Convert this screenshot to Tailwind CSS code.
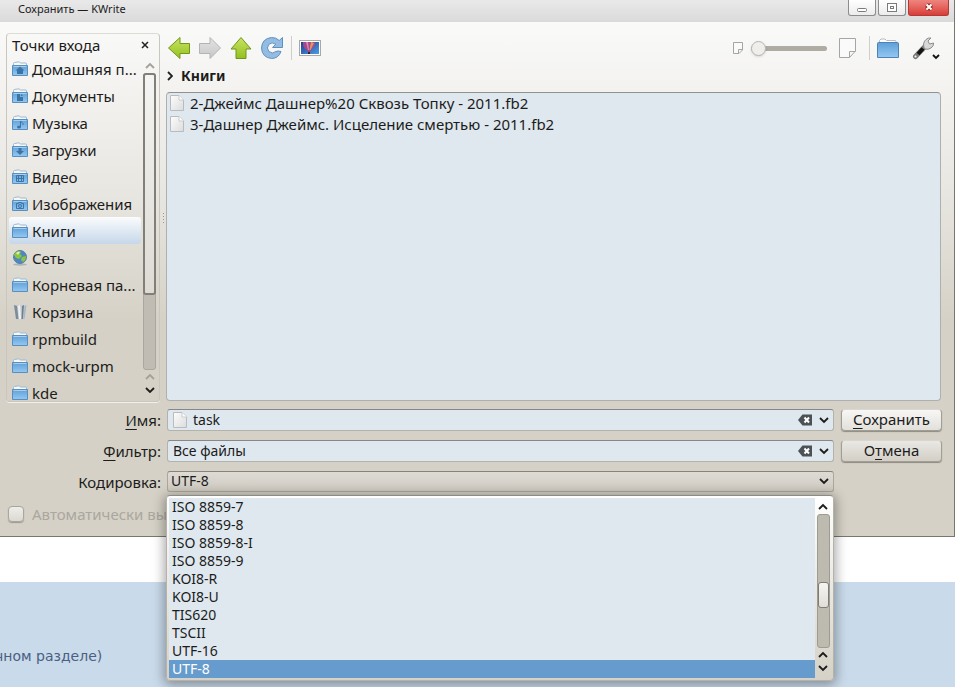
<!DOCTYPE html>
<html lang="ru">
<head>
    <meta charset="UTF-8">
    <meta name="viewport" content="width=device-width, initial-scale=1.0">
    <title>Сохранить — KWrite</title>
    <script src="https://cdn.jsdelivr.net/npm/@tailwindcss/browser@4"></script>
</head>
<body class="min-h-screen flex flex-col overflow-hidden bg-white font-['Noto_Sans',sans-serif] text-[15px] leading-5 text-[#1c1c1c]">
    <!-- Shared icons -->
    <svg class="absolute size-0" aria-hidden="true">
        <defs>
            <linearGradient id="g-blue" x1="0" y1="0" x2="0" y2="1"><stop offset="0" stop-color="#5f9fd6"/><stop offset="1" stop-color="#94c8f2"/></linearGradient>
            <linearGradient id="g-green" x1="0" y1="0" x2="0" y2="1"><stop offset="0" stop-color="#c9e463"/><stop offset="1" stop-color="#93c01f"/></linearGradient>
            <linearGradient id="g-gray" x1="0" y1="0" x2="0" y2="1"><stop offset="0" stop-color="#e4e4e4"/><stop offset="1" stop-color="#c6c6c6"/></linearGradient>
            <linearGradient id="g-page" x1="0" y1="0" x2="1" y2="1"><stop offset="0" stop-color="#fdfdfd"/><stop offset="1" stop-color="#dcdcdc"/></linearGradient>
            <linearGradient id="g-sky" x1="0" y1="0" x2="1" y2="1"><stop offset="0" stop-color="#1c3f8c"/><stop offset="1" stop-color="#4f9be6"/></linearGradient>
        </defs>
        <symbol id="folder" viewBox="0 0 16 16">
            <path d="M1.5 5V2.5Q1.5 1.5 2.5 1.5L7 .8L8.5 2H14Q14.5 2 14.5 3V5" fill="#f4f8fb" stroke="#9fb9cf"/>
            <path d="M.5 4.5H15.5V14.5H.5Z" fill="url(#g-blue)" stroke="#5a8fbd"/>
            <path d="M1.5 5.5H14.5" stroke="#a5cff0"/>
        </symbol>
        <symbol id="page" viewBox="0 0 14 16">
            <path d="M.5.5H9L13.5 5V15.5H.5Z" fill="url(#g-page)" stroke="#b9bcbe"/>
            <path d="M9 .5V5H13.5" fill="#fff" stroke="#c8cacb"/>
        </symbol>
        <symbol id="down" viewBox="0 0 10 7"><path d="M1 1L5 5L9 1" fill="none" stroke="currentColor" stroke-width="1.800"/></symbol>
        <symbol id="up" viewBox="0 0 10 7"><path d="M1 6L5 2L9 6" fill="none" stroke="currentColor" stroke-width="1.800"/></symbol>
        <symbol id="clear" viewBox="0 0 14 12">
            <path d="M0 6L4.500 .5H14V11.500H4.500Z" fill="#4c5155"/>
            <path d="M6.500 3.500L11 8.500M11 3.500L6.500 8.500" stroke="#fff" stroke-width="2"/>
        </symbol>
    </svg>

    <!-- Dialog window -->
    <div class="relative z-10 flex flex-col border-r border-b border-[#77776f] bg-linear-to-b from-[#fafaf9] from-[22px] via-[#e9e7e2] via-35% to-[#d5d1c6] to-60%">
        <header class="flex h-[22px] items-start justify-between bg-linear-to-b from-[#e9e9e9] to-[#dadada] pl-[18px] pr-[5px]">
            <h1 class="text-[11px] leading-[18px]">Сохранить — KWrite</h1>
            <div class="flex gap-[2px]">
                <button aria-label="Свернуть" class="flex h-4 w-7 items-center justify-center rounded-b-[3px] border border-t-0 border-[#8c8c8c] bg-linear-to-b from-white to-[#ececec]">
                    <svg class="h-4 w-3" viewBox="0 0 12 16" fill="#fff" stroke="#7b7b7b"><rect x="1.500" y="8.500" width="9" height="3" rx="1"/></svg>
                </button>
                <button aria-label="Развернуть" class="flex h-4 w-7 items-center justify-center rounded-b-[3px] border border-t-0 border-[#8c8c8c] bg-linear-to-b from-white to-[#ececec]">
                    <svg class="h-4 w-3" viewBox="0 0 12 16" fill="#fff" stroke="#7b7b7b"><rect x="1.500" y="3.500" width="9" height="8"/><rect x="4.500" y="6.500" width="3" height="2"/></svg>
                </button>
                <button aria-label="Закрыть" class="flex h-4 w-[41px] items-center justify-center rounded-b-[3px] border border-t-0 border-[#b03a35] bg-linear-to-b from-[#ee8580] to-[#d93b38]">
                    <svg class="h-4 w-3" viewBox="0 0 12 16"><path d="M3.500 4.500L8.500 9.500M8.500 4.500L3.500 9.500" stroke="#8d2a26" stroke-width="4"/><path d="M3.500 4.500L8.500 9.500M8.500 4.500L3.500 9.500" stroke="#fff" stroke-width="2"/></svg>
                </button>
            </div>
        </header>

        <div class="flex h-[380px] pl-[6px] pr-[13px] pt-[11px]">
            <!-- Places -->
            <aside class="flex w-[154px] shrink-0 flex-col overflow-hidden rounded-[4px] border border-[#c9c6be] border-t-[#dddbd6] shadow-[0_1px_0_#f2f0ec]">
                <div class="flex h-[21px] shrink-0 items-center justify-between pl-[5px] pr-2">
                    <h2 class="text-[15px]">Точки входа</h2>
                    <button aria-label="Закрыть панель" class="flex size-3 items-center justify-center rounded-full">
                        <svg class="size-2" viewBox="0 0 8 8"><path d="M1 1L7 7M7 1L1 7" stroke="#222" stroke-width="1.500"/></svg>
                    </button>
                </div>
                <div class="flex min-h-0 flex-1">
                    <ul class="min-w-0 flex-1 overflow-hidden pl-[2px]">
                        <li><a href="#" class="flex h-[27px] items-center gap-1 pl-[3px]"><svg class="size-4 shrink-0"><use href="#folder"/><path d="M8 5.500L3.500 9.500H5V13H11V9.500H12.500Z" fill="#3d74a6"/></svg><span class="whitespace-nowrap">Домашняя п...</span></a></li>
                        <li><a href="#" class="flex h-[27px] items-center gap-1 pl-[3px]"><svg class="size-4 shrink-0"><use href="#folder"/><path d="M5 6H8V9H11V13H5ZM9 6L11 8H9Z" fill="#3d74a6"/></svg><span>Документы</span></a></li>
                        <li><a href="#" class="flex h-[27px] items-center gap-1 pl-[3px]"><svg class="size-4 shrink-0"><use href="#folder"/><path d="M8.500 12V6L11 8.500V10" fill="none" stroke="#3d74a6"/><ellipse cx="7" cy="12" rx="2" ry="1.500" fill="#3d74a6"/></svg><span>Музыка</span></a></li>
                        <li><a href="#" class="flex h-[27px] items-center gap-1 pl-[3px]"><svg class="size-4 shrink-0"><use href="#folder"/><path d="M6.500 6H9.500V9H12L8 13L4 9H6.500Z" fill="#3d74a6"/></svg><span>Загрузки</span></a></li>
                        <li><a href="#" class="flex h-[27px] items-center gap-1 pl-[3px]"><svg class="size-4 shrink-0"><use href="#folder"/><path d="M4.500 6.500H11.500V12.500H4.500ZM6.500 6.500V12.500M9.500 6.500V12.500M4.500 9.500H11.500" fill="none" stroke="#3d74a6"/></svg><span>Видео</span></a></li>
                        <li><a href="#" class="flex h-[27px] items-center gap-1 pl-[3px]"><svg class="size-4 shrink-0"><use href="#folder"/><path d="M4.500 7.500H6.500V6.500H9.500V7.500H11.500V12.500H4.500Z" fill="none" stroke="#3d74a6"/><circle cx="8" cy="10" r="1.500" fill="none" stroke="#3d74a6"/></svg><span>Изображения</span></a></li>
                        <li><a href="#" aria-current="true" class="flex h-[27px] items-center gap-1 rounded-[3px] bg-linear-to-b from-[#fbfcfd] to-[#c6d7e9] pl-[3px]"><svg class="size-4 shrink-0"><use href="#folder"/></svg><span>Книги</span></a></li>
                        <li><a href="#" class="flex h-[27px] items-center gap-1 pl-[3px]">
                            <svg class="size-4 shrink-0" viewBox="0 0 16 16"><ellipse cx="8" cy="14.500" rx="7" ry="1.200" fill="#aab4bb"/><circle cx="8" cy="7" r="6.500" fill="#4d87c4" stroke="#5a7fa5"/><path d="M3 3Q6 0 9 1.500L8 4L10 6L7 9L4 8L2 5ZM10 7L14 6Q14 10 11 12L9 10Z" fill="#8cc63c"/><path d="M4 3Q6 1 8 2L6 5Z" fill="#d9f0a0"/></svg>
                            <span>Сеть</span></a></li>
                        <li><a href="#" class="flex h-[27px] items-center gap-1 pl-[3px]"><svg class="size-4 shrink-0"><use href="#folder"/></svg><span class="whitespace-nowrap">Корневая па...</span></a></li>
                        <li><a href="#" class="flex h-[27px] items-center gap-1 pl-[3px]">
                            <svg class="size-4 shrink-0" viewBox="0 0 16 16"><path d="M1.500 1L14.500 1L12.500 15.500H4Z" fill="#c9ced2"/><path d="M2 1L5 2L6.500 15H4Z" fill="#7d8c98"/><path d="M6 2L8 1L9 15H7Z" fill="#eef1f3"/><path d="M10 2L12 1L11 15H9.500Z" fill="#6f8090"/><path d="M12.500 2L14.500 1L12.500 15H11.500Z" fill="#a9b8c4"/></svg>
                            <span>Корзина</span></a></li>
                        <li><a href="#" class="flex h-[27px] items-center gap-1 pl-[3px]"><svg class="size-4 shrink-0"><use href="#folder"/></svg><span>rpmbuild</span></a></li>
                        <li><a href="#" class="flex h-[27px] items-center gap-1 pl-[3px]"><svg class="size-4 shrink-0"><use href="#folder"/></svg><span>mock-urpm</span></a></li>
                        <li><a href="#" class="flex h-[27px] items-center gap-1 pl-[3px]"><svg class="size-4 shrink-0"><use href="#folder"/></svg><span>kde</span></a></li>
                    </ul>
                    <div class="flex w-[18px] shrink-0 flex-col items-center pb-[7px] pr-[1px] pt-[7px]">
                        <svg class="mb-1 h-[7px] w-[10px] shrink-0 text-[#a3a19b]"><use href="#up"/></svg>
                        <div class="w-[13px] flex-1 rounded-[3px] border border-[#aaa79e] bg-[#c0bcb3]">
                            <div class="-mx-px -mt-px h-[222px] rounded-[3px] border-2 border-[#827f78] bg-linear-to-b from-[#f4f4f2] to-[#dedbd5]"></div>
                        </div>
                        <svg class="mt-[3px] h-[7px] w-[10px] shrink-0 text-[#a3a19b]"><use href="#up"/></svg>
                        <svg class="mt-[7px] h-[7px] w-[10px] shrink-0"><use href="#down"/></svg>
                    </div>
                </div>
            </aside>

            <!-- Splitter -->
            <div class="flex w-[6px] shrink-0 items-center justify-center">
                <svg class="h-3 w-[3px]" viewBox="0 0 3 12" fill="#98958d"><path d="M1 1h1v1H1zM1 4h1v1H1zM1 7h1v1H1zM1 10h1v1H1z"/></svg>
            </div>

            <main class="flex min-w-0 flex-1 flex-col">
                <div class="flex h-[30px] items-center justify-between">
                    <div class="flex items-center gap-[7px] pl-px">
                        <button aria-label="Назад"><svg class="size-6" viewBox="0 0 24 24"><path d="M1.500 12L13 1.500V7.500H22.500V17.500H13V22.500Z" fill="url(#g-green)" stroke="#71951d" stroke-linejoin="round"/></svg></button>
                        <button aria-label="Вперёд"><svg class="size-6" viewBox="0 0 24 24"><path d="M22.500 12L12 1.500V7.500H1.500V17.500H12V22.500Z" fill="url(#g-gray)" stroke="#b4b4b4" stroke-linejoin="round"/></svg></button>
                        <button aria-label="Вверх"><svg class="size-6" viewBox="0 0 24 24"><path d="M12 1.500L22 13H17V22.500H7V13H2Z" fill="url(#g-green)" stroke="#71951d" stroke-linejoin="round"/></svg></button>
                        <button aria-label="Обновить"><svg class="size-6" viewBox="0 0 24 24"><path d="M22.500 1.500V11.500H12.500L15.800 8.200Q12 5.500 8.800 8.300Q6 12 8.800 15.500Q12.500 18.500 16 15.500Q17.500 14.500 21 15.500Q18.500 22.500 11.500 22.500Q2 21.500 1.500 12Q2 2.500 11.500 1.500Q16 1.300 19.200 4.500Z" fill="#92bce2" stroke="#5f90c0" stroke-linejoin="round"/></svg></button>
                        <div class="h-6 w-px bg-[#d0cec8]"></div>
                        <button aria-label="Предпросмотр">
                            <svg class="h-4 w-[22px]" viewBox="0 0 22 16"><rect x=".5" y=".5" width="21" height="15" fill="#fff" stroke="#a8a8a8"/><rect x="2" y="2" width="18" height="12" fill="url(#g-sky)"/><path d="M4 2H16Q17 6 12 10L11 12H9L8 10Q3 7 4 2Z" fill="#a8488c"/><path d="M7 2L9 10H10L9 2Z" fill="#d88ab8"/><path d="M12 2L10.500 10H11.500L15 3Z" fill="#dc9a5a"/><rect x="9" y="12" width="2" height="2" fill="#3a2030"/></svg>
                        </button>
                    </div>
                    <div class="flex items-center">
                        <svg class="h-3 w-[10px]" viewBox="0 0 10 12" fill="#fafafa" stroke="#a5a5a3"><path d="M.5.5H9.500V8L6 11.500H.5ZM9.500 7.500H5.500V11.500"/></svg>
                        <input type="range" aria-label="Размер значков" min="0" max="100" value="0" class="ml-2 mr-3 h-4 w-[76px] appearance-none bg-transparent [&::-webkit-slider-runnable-track]:h-[5px] [&::-webkit-slider-runnable-track]:rounded-full [&::-webkit-slider-runnable-track]:bg-[#aeaca3] [&::-webkit-slider-thumb]:-mt-[5px] [&::-webkit-slider-thumb]:size-[15px] [&::-webkit-slider-thumb]:appearance-none [&::-webkit-slider-thumb]:rounded-full [&::-webkit-slider-thumb]:border [&::-webkit-slider-thumb]:border-[#b8b6b0] [&::-webkit-slider-thumb]:bg-[#efeeec] [&::-webkit-slider-thumb]:shadow-sm">
                        <svg class="h-5 w-[17px]" viewBox="0 0 17 20" fill="#fafafa" stroke="#a5a5a3"><path d="M.5.5H16.500V13L10.500 19.500H.5ZM16.500 13.500H10.500V19.500"/></svg>
                        <div class="ml-[13px] mr-[6px] h-6 w-px bg-[#d0cec8]"></div>
                        <button aria-label="Создать папку">
                            <svg class="h-5 w-6" viewBox="0 0 24 20"><path d="M3.500 5V2.500L5 1H9L10.500 2.500H19.500L20.500 5" fill="#fff" stroke="#b5bcc2"/><path d="M1.500 5.500Q1.500 4.500 2.500 4.500H21.500Q22.500 4.500 22.500 5.500V19.500H1.500Z" fill="url(#g-blue)" stroke="#4a83b5"/></svg>
                        </button>
                        <button aria-label="Параметры" class="ml-3 mr-px flex items-end">
                            <svg class="h-6 w-[22px]" viewBox="0 0 22 24"><path d="M3.500 20.500L13 10.500" stroke="#777" stroke-width="5" stroke-linecap="round"/><path d="M6 18L11 12.500" stroke="#151515" stroke-width="4"/><path d="M12 12Q10.500 6.500 14 3.500Q16 1.500 19 2L16 5L17.500 8L21.500 7Q22 10 19 12Q16 14 13.500 13Z" fill="#d8d8d8" stroke="#8a8a8a"/><circle cx="3.500" cy="20.500" r="1.500" fill="#f4f4f4" stroke="#777"/></svg>
                            <svg class="-ml-[2px] h-[6px] w-2" viewBox="0 0 8 6"><path d="M1 1L4 4L7 1" fill="none" stroke="#111" stroke-width="1.800"/></svg>
                        </button>
                    </div>
                </div>

                <nav aria-label="Путь" class="flex h-[29px] items-center gap-2 pb-[3px] pl-[1px]">
                    <svg class="h-[10px] w-[6px]" viewBox="0 0 6 10"><path d="M1 1L5 5L1 9" fill="none" stroke="#222" stroke-width="1.800"/></svg>
                    <a href="#" class="text-sm font-bold">Книги</a>
                </nav>

                <ul class="mb-px flex-1 rounded-[4px] border border-[#adb0ae] border-t-[#8f9291] bg-[#dfe8ee] pl-[3px]">
                    <li class="flex h-[21px] items-center gap-[6px] pb-px whitespace-nowrap"><svg class="h-4 w-[14px]"><use href="#page"/></svg>2-Джеймс Дашнер%20 Сквозь Топку - 2011.fb2</li>
                    <li class="flex h-[21px] items-center gap-[6px] pb-px whitespace-nowrap"><svg class="h-4 w-[14px]"><use href="#page"/></svg>3-Дашнер Джеймс. Исцеление смертью - 2011.fb2</li>
                </ul>
            </main>
        </div>

        <!-- Name, filter, encoding -->
        <form class="grid grid-cols-[161px_minmax(0,1fr)_101px] gap-x-[6px] gap-y-[9px] pr-3 pt-[7px]">
            <label for="name" class="text-right leading-[22px]"><span class="underline underline-offset-3">И</span>мя:</label>
            <div class="mr-px flex h-[22px] items-center rounded-[3px] border border-[#b3b3ae] border-t-[#85878a] bg-[#dfe8ee] pl-[5px] pr-1">
                <svg class="h-4 w-[14px]"><use href="#page"/></svg>
                <input id="name" type="text" value="task" class="ml-[6px] min-w-0 flex-1 text-sm outline-none">
                <button type="button" aria-label="Очистить имя"><svg class="h-3 w-[14px]"><use href="#clear"/></svg></button>
                <button type="button" aria-label="Список имён" class="ml-[7px]"><svg class="h-[7px] w-[10px]"><use href="#down"/></svg></button>
            </div>
            <button type="button" class="h-[22px] rounded-[4px] border border-[#a19e95] border-t-[#d8d6d0] bg-linear-to-b from-[#f8f7f5] to-[#e2e0da] pb-[2px] leading-[18px] shadow-[0_1px_1px_#8d8a82]"><span class="underline underline-offset-3">С</span>охранить</button>

            <label for="filter" class="text-right leading-[22px]"><span class="underline underline-offset-3">Ф</span>ильтр:</label>
            <div class="mr-px flex h-[22px] items-center rounded-[3px] border border-[#b3b3ae] border-t-[#85878a] bg-[#dfe8ee] pl-[5px] pr-1">
                <input id="filter" type="text" value="Все файлы" class="min-w-0 flex-1 text-sm outline-none">
                <button type="button" aria-label="Очистить фильтр"><svg class="h-3 w-[14px]"><use href="#clear"/></svg></button>
                <button type="button" aria-label="Список фильтров" class="ml-[7px]"><svg class="h-[7px] w-[10px]"><use href="#down"/></svg></button>
            </div>
            <button type="button" class="h-[22px] rounded-[4px] border border-[#a19e95] border-t-[#d8d6d0] bg-linear-to-b from-[#eae8e4] to-[#d3cfc6] pb-[2px] leading-[18px] shadow-[0_1px_1px_#8d8a82]">О<span class="underline underline-offset-3">т</span>мена</button>

            <label for="encoding" class="text-right leading-[22px]">Кодировка:</label>
            <div class="relative mr-px h-[22px]">
                <select id="encoding" class="block h-[21px] w-full appearance-none rounded-[3px] border border-[#aaa79e] border-t-[#85837c] bg-linear-to-b from-[#dedbd5] to-[#cfcbc2] pb-px pl-[3px] text-sm leading-[18px] outline-none">
                    <option>UTF-8</option>
                </select>
                <svg class="pointer-events-none absolute right-[5px] top-[7px] h-[7px] w-[10px]"><use href="#down"/></svg>

                <!-- Open encoding list -->
                <div class="absolute -left-px right-0 top-6 z-20 flex rounded-[4px] border border-[#b5b2a9] border-t-[#8d8b85] bg-linear-to-b from-white to-[#d5d1c6] py-[2px] pl-[2px] pr-[2px] shadow-[0_2px_12px_2px_rgba(0,0,0,0.35)]">
                    <ul role="listbox" aria-label="Кодировка" class="flex-1 bg-[#dfe8ee] text-sm leading-[18px]">
                        <li role="option" class="pl-[3px]">ISO 8859-7</li>
                        <li role="option" class="pl-[3px]">ISO 8859-8</li>
                        <li role="option" class="pl-[3px]">ISO 8859-8-I</li>
                        <li role="option" class="pl-[3px]">ISO 8859-9</li>
                        <li role="option" class="pl-[3px]">KOI8-R</li>
                        <li role="option" class="pl-[3px]">KOI8-U</li>
                        <li role="option" class="pl-[3px]">TIS620</li>
                        <li role="option" class="pl-[3px]">TSCII</li>
                        <li role="option" class="pl-[3px]">UTF-16</li>
                        <li role="option" aria-selected="true" class="bg-[#669bcd] pl-[3px] text-white">UTF-8</li>
                    </ul>
                    <div class="flex w-4 flex-col items-center pb-[6px] pt-[5px]">
                        <svg class="mb-1 h-[7px] w-[10px]"><use href="#up"/></svg>
                        <div class="flex w-[13px] flex-1 flex-col justify-end rounded-[3px] border border-[#9e9b92] bg-[#bdbab0] pb-[39px]">
                            <div class="h-[26px] rounded-[3px] border border-[#7f7c75] bg-linear-to-b from-[#f6f5f3] to-[#e0ddd7]"></div>
                        </div>
                        <svg class="mt-[3px] h-[7px] w-[10px]"><use href="#up"/></svg>
                        <svg class="mt-[7px] h-[7px] w-[10px]"><use href="#down"/></svg>
                    </div>
                </div>
            </div>
        </form>

        <label class="flex h-[43px] w-[166px] items-center gap-2 overflow-hidden whitespace-nowrap pb-[2px] pl-2 text-[#aaa79e]">
            <input type="checkbox" disabled class="size-4 shrink-0 appearance-none rounded-[4px] border border-[#a9a69d] bg-linear-to-b from-[#efedea] to-[#dcd9d2] shadow-[0_1px_1px_#9b988f]">
            Автоматически вы
        </label>
    </div>

    <!-- Page behind the dialog -->
    <div class="mt-[45px] flex-1 bg-[#c9daea] pt-[65px] font-['DejaVu_Sans',sans-serif] text-sm leading-[18px] text-[#4a5f82]">
        <p class="-ml-[5px]">чном разделе)</p>
    </div>
</body>
</html>
